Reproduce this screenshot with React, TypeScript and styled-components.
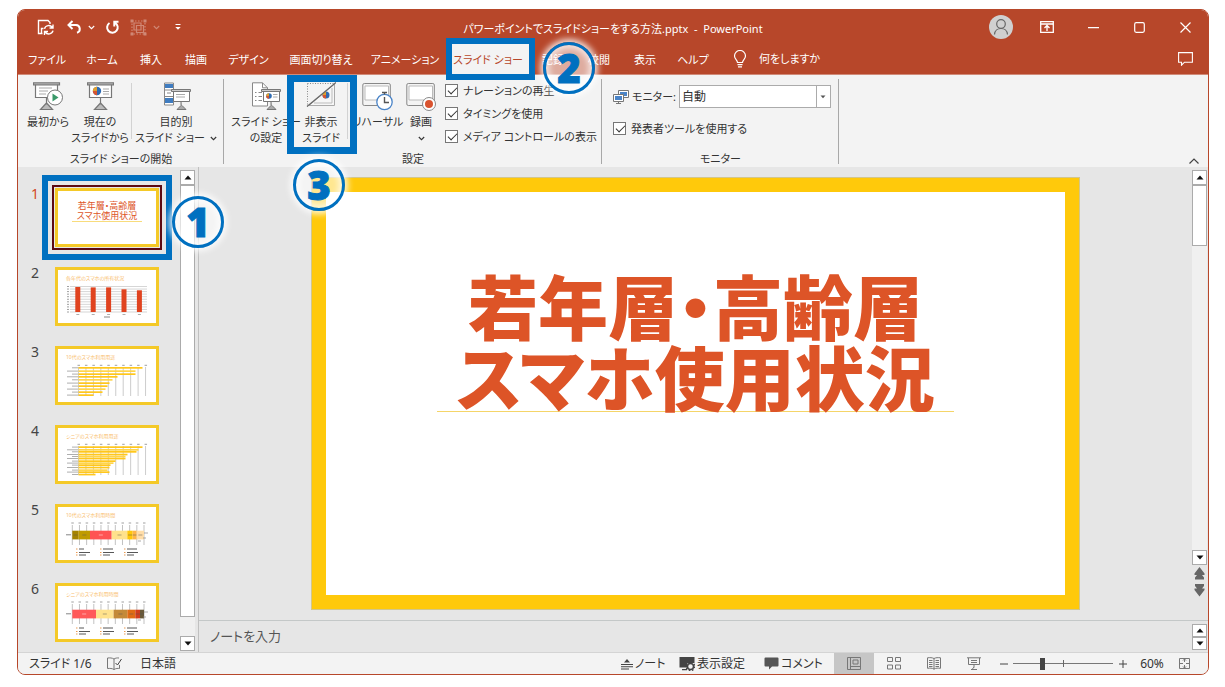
import React from 'react';
import styled, { createGlobalStyle, css } from 'styled-components';

const BLUE = '#0070c0';
const BRAND = '#b7472a';

const GlobalStyle = createGlobalStyle`
  * { box-sizing: border-box; }
  body {
    margin: 0;
    background: #fff;
    color: #333;
    font: 12px/16px "Noto Sans", "Noto Sans CJK JP", sans-serif;
    font-feature-settings: "palt";
  }
  button, input, select, textarea {
    margin: 0;
    padding: 0;
    border: 0;
    background: none;
    color: inherit;
    font: inherit;
    font-feature-settings: inherit;
  }
  svg { display: block; flex: none; }
`;

const Page = styled.div`
  min-height: 100vh;
  display: flex;
  padding: 9px 16px 12px 17px;
`;

const AppWindow = styled.div`
  flex: 1;
  min-width: 0;
  display: flex;
  flex-direction: column;
  border: 1px solid ${BRAND};
  border-radius: 8px;
  overflow: hidden;
  background: #e6e6e6;
`;

/* Title bar and tabs */

const Header = styled.header`
  background: ${BRAND};
  color: #fff;
  font-size: 11px;
`;

const TitleBar = styled.div`
  height: 34px;
  display: grid;
  grid-template-columns: 1fr auto 1fr;
  align-items: center;
`;

const QuickAccess = styled.div`
  display: flex;
  align-items: center;
  padding-left: 19px;
`;

const QuickButton = styled.button<{ $w: number; $dim?: boolean }>`
  width: ${p => p.$w}px;
  height: 24px;
  display: flex;
  align-items: center;
  opacity: ${p => (p.$dim ? 0.35 : 1)};
`;

const DocTitle = styled.h1`
  margin: 0;
  padding-top: 4px;
  font-size: 11px;
  font-weight: 400;
  white-space: pre;
`;

const WindowControls = styled.div`
  display: flex;
  justify-content: flex-end;
  align-items: center;
`;

const ControlButton = styled.button`
  width: 46px;
  height: 30px;
  display: flex;
  align-items: center;
  justify-content: center;
`;

const Tabs = styled.nav`
  height: 30px;
  display: flex;
  padding-left: 1px;
`;

const Tab = styled.button<{ $w: number; $active?: boolean }>`
  position: relative;
  width: ${p => p.$w}px;
  padding-top: 2px;
  white-space: nowrap;
  ${p => p.$active && css`background: #f3f3f3; color: ${BRAND};`}
`;

const TellMe = styled.button`
  display: flex;
  align-items: center;
  gap: 12px;
  margin-left: 15px;
`;

const Spacer = styled.div`
  flex: 1;
`;

/* Numbered guide marks */

const Frame = styled.span<{ $inset: string; $thick: number }>`
  position: absolute;
  inset: ${p => p.$inset};
  border: ${p => p.$thick}px solid ${BLUE};
  z-index: 2;
  pointer-events: none;
`;

const Badge = styled.span<{ $x: number; $y: number }>`
  position: absolute;
  left: ${p => p.$x}px;
  top: ${p => p.$y}px;
  z-index: 3;
  width: 52px;
  height: 52px;
  display: flex;
  align-items: center;
  justify-content: center;
  border: 3px solid ${BLUE};
  border-radius: 50%;
  background: rgba(255, 255, 255, 0.55);
  box-shadow: 0 0 6px 3px rgba(255, 255, 255, 0.85), inset 0 0 6px 3px rgba(255, 255, 255, 0.7);
  color: ${BLUE};
  font: 900 40px/46px "Noto Sans", sans-serif;
  -webkit-text-stroke: 1px ${BLUE};
  pointer-events: none;
`;

/* Ribbon */

const Ribbon = styled.div`
  display: flex;
  min-height: 93px;
  background: #f3f3f3;
  border-top: 1px solid #d08a78;
  font-size: 11px;
`;

const Group = styled.section<{ $w: number }>`
  width: ${p => p.$w}px;
  flex: none;
  display: flex;
  flex-direction: column;
  position: relative;
  &::after {
    content: "";
    position: absolute;
    right: 0;
    top: 4px;
    bottom: 3px;
    width: 1px;
    background: #a8a8a8;
  }
`;

const GroupBody = styled.div<{ $pad: number }>`
  flex: 1;
  display: flex;
  padding-left: ${p => p.$pad}px;
`;

const GroupName = styled.div`
  height: 16px;
  text-align: center;
`;

const BigButton = styled.button<{ $w: number }>`
  position: relative;
  width: ${p => p.$w}px;
  flex: none;
  padding-top: 7px;
  display: flex;
  flex-direction: column;
  align-items: center;
  white-space: nowrap;
`;

const BigIcon = styled.svg`
  margin-bottom: 3px;
`;

const LabelLine = styled.span`
  height: 16px;
  display: flex;
  align-items: center;
  gap: 5px;
`;

const InnerRule = styled.i`
  width: 1px;
  flex: none;
  height: 56px;
  margin: 8px 0 0 4px;
  background: #d2d2d2;
`;

const Checks = styled.div`
  padding: 4px 0 0 11px;
`;

const CheckRow = styled.label`
  height: 23px;
  display: flex;
  align-items: center;
  gap: 5px;
  white-space: nowrap;
`;

const CheckBox = styled.input.attrs({ type: 'checkbox' })`
  appearance: none;
  width: 13px;
  height: 13px;
  flex: none;
  border: 1px solid #777;
  background: #fff;
  &:checked::after {
    content: "";
    display: block;
    width: 8px;
    height: 4px;
    margin: 2px 0 0 2px;
    border: solid #333;
    border-width: 0 0 1px 1px;
    transform: rotate(-45deg);
  }
`;

const MonitorPane = styled.div`
  flex: 1;
  padding: 10px 8px 0 0;
`;

const MonitorRow = styled.div`
  display: flex;
  align-items: center;
  gap: 3px;
  height: 23px;
  margin-bottom: 9px;
  white-space: nowrap;
`;

const SelectBox = styled.div`
  flex: 1;
  height: 23px;
  display: flex;
  position: relative;
  border: 1px solid #ababab;
  background: #fff;
  svg {
    position: absolute;
    right: 0;
    top: 0;
    pointer-events: none;
  }
`;

const Select = styled.select`
  appearance: none;
  flex: 1;
  padding-left: 2px;
  font-size: 12px;
`;

const CollapseButton = styled.button`
  align-self: flex-end;
  padding: 0 9px 3px 0;
`;

/* Work area */

const Work = styled.div`
  flex: 1;
  display: flex;
  align-items: stretch;
`;

const SlideList = styled.ol`
  width: 162px;
  margin: 0;
  padding: 21px 0 10px 13px;
  display: flex;
  flex-direction: column;
  gap: 20px;
  list-style: none;
`;

const SlideItem = styled.li<{ $active?: boolean }>`
  position: relative;
  display: flex;
  gap: 16px;
  color: ${p => (p.$active ? '#d24726' : '#444')};
  font-size: 14px;
  line-height: 12px;
`;

const SlideNumber = styled.span`
  width: 8px;
`;

const Thumb = styled.button<{ $active?: boolean }>`
  width: 104px;
  height: 59px;
  background: #fff;
  border: 3px solid #f4c928;
  outline: ${p => (p.$active ? '2px solid #5c0a12' : '0')};
  outline-offset: 1px;
`;

const ThumbTitle = styled.span`
  display: block;
  width: 70px;
  margin: 0 auto 12px;
  border-bottom: 1px solid #f8dc7c;
  color: #dd5528;
  font-size: 9px;
  line-height: 10px;
  text-align: center;
`;

const ScrollColumn = styled.div<{ $pb: number }>`
  width: 15px;
  display: flex;
  flex-direction: column;
  padding: 3px 0 ${p => p.$pb}px;
`;

const ScrollButton = styled.button<{ $small?: boolean }>`
  height: ${p => (p.$small ? 13 : 15)}px;
  display: flex;
  align-items: center;
  justify-content: center;
  border: 1px solid #ababab;
  background: #fff;
`;

const Track = styled.div`
  flex: 1;
  display: flex;
  flex-direction: column;
  background: #f0f0f0;
`;

const ScrollThumb = styled.div<{ $h?: number }>`
  ${p => (p.$h ? css`height: ${p.$h}px;` : css`flex: 1; margin-bottom: 19px;`)}
  border: 1px solid #ababab;
  background: #fff;
`;

const PageJump = styled.button`
  height: 17px;
  display: flex;
  align-items: center;
  justify-content: center;
`;

const Editor = styled.main`
  flex: 1;
  min-width: 0;
  display: flex;
  flex-direction: column;
  margin-left: 3px;
  border-left: 1px solid #c0c0c0;
`;

const StageRow = styled.div`
  flex: 1;
  display: flex;
  padding-right: 1px;
`;

const Stage = styled.div`
  flex: 1;
  padding: 10px 112px 10px;
`;

const Slide = styled.article`
  min-height: 433px;
  border: 15px solid #ffc90b;
  outline: 1px solid #d2c68c;
  outline-offset: -1px;
  background: #fff;
  padding-top: 77px;
`;

const SlideTitle = styled.h2`
  width: 70%;
  margin: 0 auto;
  border-bottom: 1px solid #f5d568;
  color: #dd5427;
  font: 900 70px/71px "Noto Sans CJK JP", sans-serif;
  font-feature-settings: "palt";
  text-align: center;
  white-space: nowrap;
`;

const NotesRow = styled.div`
  display: flex;
  height: 32px;
  border-top: 1px solid #c4c8c8;
  padding-right: 1px;
`;

const Notes = styled.textarea`
  flex: 1;
  resize: none;
  padding: 5px 0 0 11px;
  font-size: 13px;
  line-height: 20px;
  outline: 0;
  &::placeholder { color: #555; }
`;

/* Status bar */

const StatusBar = styled.footer`
  height: 22px;
  display: flex;
  align-items: center;
  background: #f3f3f3;
  border-top: 1px solid #d4d4d4;
  padding-left: 11px;
`;

const StatusButton = styled.button<{ $w: number }>`
  width: ${p => p.$w}px;
  display: flex;
  align-items: center;
  gap: 2px;
  white-space: nowrap;
`;

const ViewButton = styled.button<{ $active?: boolean }>`
  width: 40px;
  height: 21px;
  display: flex;
  align-items: center;
  justify-content: center;
  background: ${p => (p.$active ? '#c6c6c6' : 'none')};
`;

const ZoomButton = styled.button`
  width: 19px;
  display: flex;
  justify-content: center;
`;

const ZoomSlider = styled.input.attrs({ type: 'range' })`
  appearance: none;
  width: 100px;
  height: 12px;
  background:
    linear-gradient(#666, #666) center / 1px 7px no-repeat,
    linear-gradient(#777, #777) center / 100% 1px no-repeat;
  &::-webkit-slider-thumb {
    appearance: none;
    width: 5px;
    height: 12px;
    background: #444;
  }
`;

const ZoomValue = styled.button`
  width: 40px;
  margin-right: 7px;
  text-align: center;
`;

/* Glyphs */

const Chevron = ({ up }: { up?: boolean }) => (
  <svg width="7" height="5" viewBox="0 0 7 5" fill="none" stroke="currentColor" strokeWidth="1.1">
    <path d={up ? 'M.5 4.2 3.5 1l3 3.2' : 'M.8 1l2.7 2.7L6.2 1'} />
  </svg>
);

const Triangle = ({ down }: { down?: boolean }) => (
  <svg width="8" height="5" viewBox="0 0 8 5" fill="#111">
    <path d={down ? 'M.5.5h7L4 4.5z' : 'M.5 4.5h7L4 .5z'} />
  </svg>
);

const DoubleArrow = ({ down }: { down?: boolean }) => (
  <svg width="11" height="13" viewBox="0 0 11 13" fill="#666">
    {down
      ? <path d="M1 0h9v2L8 4.5h2.5V6l-5 6.5-5-6.5V4.5H3L1 2z" />
      : <path d="M10 12.500H1v-2L3 8H.5V6.500L5.500 0l5 6.500V8H8l2 2.500z" />}
  </svg>
);

const Easel = ({ x = 0, y = 0 }: { x?: number; y?: number }) => (
  <g transform={`translate(${x} ${y})`} fill="none" stroke="#777" strokeWidth="1.2">
    <path d="M2.500 2v13.500h22V2" fill="#fff" />
    <path d="M.5.8h26v2H.5z" fill="#ccc" />
    <path d="M13.500 15.500v7M13.500 21l-6 6.500h12z" fill="#bbb" />
  </g>
);

const SmallEasel = ({ children }: { children?: React.ReactNode }) => (
  <g fill="none" stroke="#777" strokeWidth="1">
    <path d="M12.500 9v10.500h16V9" fill="#fff" />
    <path d="M10.500 7.500h19v2h-19z" fill="#ccc" />
    <path d="M20 19.500v4l-4 4h9l-4-4" fill="#aaa" />
    {children}
  </g>
);

const pie = (cx: number, cy: number, r: number) => (
  <g stroke="none">
    <circle cx={cx} cy={cy} r={r} fill="#2f6cb3" />
    <path d={`M${cx} ${cy}V${cy - r}A${r} ${r} 0 0 0 ${cx - r} ${cy}z`} fill="#e0a030" />
    <path d={`M${cx} ${cy}H${cx - r}A${r} ${r} 0 0 0 ${cx} ${cy + r}z`} fill="#d65532" />
  </g>
);

/* Miniature slides */

const series = (n: number, start: number, step: number) => Array.from({ length: n }, (_, i) => start + i * step);

const MiniTitle = ({ children }: { children: string }) => (
  <text x="8" y="10" fontSize="5" fill="#f9bd6c">{children}</text>
);

const Mini = ({ children }: { children: React.ReactNode }) => (
  <svg width="98" height="53" viewBox="0 0 98 53">{children}</svg>
);

const ColumnChart = () => (
  <>
    {series(11, 16.500, 2.550).map(y => <path key={y} d={`M12 ${y}h77`} stroke="#bbb" strokeWidth=".6" />)}
    {series(11, 16.500, 2.550).map(y => <path key={y} d={`M9 ${y}h2`} stroke="#888" strokeWidth=".8" />)}
    {[17, 17.400, 17.400, 19.300, 20.300].map((y, i) => (
      <g key={i}>
        <rect x={17.300 + i * 15.400} y={y} width="5" height={42 - y} fill="#e0431f" />
        <path d={`M${18.300 + i * 15.400} 44.500h3`} stroke="#999" strokeWidth=".8" />
      </g>
    ))}
    <path d="M46 47h6" stroke="#888" />
  </>
);

const BarChart = ({ rows }: { rows: [number, number][] }) => (
  <>
    {series(10, 20.500, 7.450).map(x => (
      <g key={x} stroke="#aaa">
        <path d={`M${x} 18v29`} strokeWidth=".6" />
        <path d={`M${x - 1} 16.300h2.500`} stroke="#888" strokeWidth=".8" />
      </g>
    ))}
    {rows.map(([y, right], i) => (
      <g key={y}>
        <rect x="20.500" y={y - 4} width={right - 23} height="1.700" fill={i % 3 === 1 ? '#ffd54a' : '#ffc71c'} />
        <path d={`M${i % 2 ? 9 : 14} ${y - 3.200}H20`} stroke="#777" strokeWidth=".6" />
      </g>
    ))}
  </>
);

const StackChart = ({ parts }: { parts: [number, string][] }) => {
  let x = 14.300;
  return (
    <>
      {series(11, 14.300, 7.170).map(gx => (
        <g key={gx}>
          <path d={`M${gx} 18v20`} stroke="#999" strokeWidth=".6" />
          <path d={`M${gx - 1} 16h2.500`} stroke="#888" strokeWidth=".8" />
        </g>
      ))}
      <path d="M8 27.800h5" stroke="#777" strokeWidth=".9" />
      {parts.map(([w, color], i) => {
        const left = x;
        x += w;
        return (
          <g key={i}>
            <rect x={left} y="23.700" width={w} height="8.700" fill={color} />
            <path d={`M${left + w / 2 - 2} 28h4`} stroke={w > 20 ? '#fff' : '#555'} strokeOpacity=".6" strokeWidth=".8" />
          </g>
        );
      })}
      <path d="M86 26h4M85 31h3M80 34h3" stroke="#888" strokeWidth=".7" />
      {[19, 43, 67].map(lx => (
        <g key={lx} stroke="#444" strokeWidth=".9">
          <path d={`M${lx + 2} 42h${lx > 20 ? 10 : 5}M${lx + 2} 45.500h11M${lx + 2} 48h7`} />
          <path d={`M${lx - 1} 42h1.500M${lx - 1} 45.500h1.500M${lx - 1} 48h1.500`} stroke="#e89040" />
        </g>
      ))}
    </>
  );
};

const teenUses: [number, number][] = [
  [22, 87], [25.300, 80], [28.300, 80], [31, 62], [34, 57], [37.300, 54], [40.300, 52], [43.300, 50], [46.300, 47], [49.300, 38],
];
const seniorUses: [number, number][] = [
  [22.300, 87], [25, 83], [27, 81], [29.700, 72], [31.700, 70], [33.700, 70], [36.300, 60], [38.300, 58], [40.300, 55],
  [42.700, 54], [45.300, 52], [47.300, 54], [49.700, 40],
];

const slides = [
  <ThumbTitle key="t">若年層・高齢層<br />スマホ使用状況</ThumbTitle>,
  <Mini key="a"><MiniTitle>各年代のスマホの所有状況</MiniTitle><ColumnChart /></Mini>,
  <Mini key="b"><MiniTitle>10代のスマホ利用用途</MiniTitle><BarChart rows={teenUses} /></Mini>,
  <Mini key="c"><MiniTitle>シニアのスマホ利用用途</MiniTitle><BarChart rows={seniorUses} /></Mini>,
  <Mini key="d">
    <MiniTitle>10代のスマホ利用時間</MiniTitle>
    <StackChart parts={[[6.400, '#a58300'], [11.300, '#bf9b00'], [21.700, '#ff5454'], [15.600, '#ffe28c'], [5.400, '#ffc708'], [4, '#ffb546'], [7.300, '#ffdda8']]} />
  </Mini>,
  <Mini key="e">
    <MiniTitle>シニアのスマホ利用時間</MiniTitle>
    <StackChart parts={[[23.700, '#ff5a5a'], [17.600, '#ffe28c'], [13.700, '#c48a38'], [8, '#e06c14'], [4.700, '#d23c1c'], [4, '#6b5a3a']]} />
  </Mini>,
];

const tabs: [string, number][] = [
  ['ファイル', 56], ['ホーム', 54], ['挿入', 44], ['描画', 46], ['デザイン', 59], ['画面切り替え', 86],
  ['アニメーション', 82], ['スライド ショー', 84], ['記録', 46], ['校閲', 46], ['表示', 46], ['ヘルプ', 50],
];

export default function App() {
  return (
    <>
      <GlobalStyle />
      <Page>
        <AppWindow>
          <Header>
            <TitleBar>
              <QuickAccess>
                <QuickButton $w={30} aria-label="上書き保存">
                  <svg width="18" height="17" viewBox="0 0 18 17" fill="none" stroke="#fff" strokeWidth="1.400">
                    <path d="M5.500 14.500H1.500V1.500h9.500l2 2V5M4.500 14V9.500h2" />
                    <path d="M7.500 9.800a4.300 4.300 0 0 1 7.800-1.300M16 5.500v3.500h-3.500M16 11.700a4.300 4.300 0 0 1-7.800 1.300M7.500 16v-3.500H11" />
                  </svg>
                </QuickButton>
                <QuickButton $w={21} aria-label="元に戻す">
                  <svg width="15" height="14" viewBox="0 0 15 14" fill="none" stroke="#fff" strokeWidth="2">
                    <path d="M5.500 1 1.500 5l4 4M2 5h7a4 4 0 0 1 1 7.800" />
                  </svg>
                </QuickButton>
                <QuickButton $w={17} aria-label="元に戻す履歴"><Chevron /></QuickButton>
                <QuickButton $w={25} aria-label="繰り返し">
                  <svg width="15" height="15" viewBox="0 0 15 15" fill="none" stroke="#fff" strokeWidth="2">
                    <path d="M4.500 3A5.300 5.300 0 1 0 10 2.800M13.500 1.800H9.300V6.500" />
                  </svg>
                </QuickButton>
                <QuickButton $w={23} $dim aria-label="グループ化">
                  <svg width="17" height="17" viewBox="0 0 17 17" fill="none" stroke="#fff" strokeWidth="1.200">
                    <path d="M4 4h7v7H4zM6.500 6.500h7v7h-7z" />
                    <path d="M2 2h13v13H2z" strokeDasharray="1.500 1.500" />
                    <path d="M.5.5h3v3h-3zM13.500.5h3v3h-3zM.5 13.500h3v3h-3zM13.500 13.500h3v3h-3z" fill="#fff" stroke="none" />
                  </svg>
                </QuickButton>
                <QuickButton $w={22} $dim aria-label="グループ化の種類"><Chevron /></QuickButton>
                <QuickButton $w={8} aria-label="クイック アクセスのカスタマイズ">
                  <svg width="6" height="8" viewBox="0 0 6 8" fill="#fff">
                    <path d="M.5 1h5v1.100h-5zM.3 4h5.400L3 6.800z" />
                  </svg>
                </QuickButton>
              </QuickAccess>
              <DocTitle>パワーポイントでスライドショーをする方法.pptx  -  PowerPoint</DocTitle>
              <WindowControls>
                <ControlButton aria-label="アカウント">
                  <svg width="24" height="24" viewBox="0 0 24 24" fill="none" stroke="#666" strokeWidth="1.200">
                    <circle cx="12" cy="12" r="12" fill="#d0d0d0" stroke="none" />
                    <circle cx="12" cy="9" r="4.300" />
                    <path d="M5.500 19.500c.6-8 12.400-8 13 0" />
                  </svg>
                </ControlButton>
                <ControlButton aria-label="リボンの表示オプション">
                  <svg width="14" height="12" viewBox="0 0 14 12" fill="none" stroke="#fff" strokeWidth="1.300">
                    <path d="M.7.7h12.600v10.600H.7zM.7 3h12.600M7 10V5M4.500 7 7 4.500 9.500 7" />
                  </svg>
                </ControlButton>
                <ControlButton aria-label="最小化">
                  <svg width="11" height="3" viewBox="0 0 11 3"><path d="M0 1h11v1.200H0z" fill="#fff" /></svg>
                </ControlButton>
                <ControlButton aria-label="最大化">
                  <svg width="11" height="11" viewBox="0 0 11 11" fill="none" stroke="#fff" strokeWidth="1.200">
                    <rect x=".7" y=".7" width="9.600" height="9.600" rx="1.500" />
                  </svg>
                </ControlButton>
                <ControlButton aria-label="閉じる">
                  <svg width="11" height="11" viewBox="0 0 11 11" stroke="#fff" strokeWidth="1.200">
                    <path d="M.5.5l10 10M10.500.5l-10 10" />
                  </svg>
                </ControlButton>
              </WindowControls>
            </TitleBar>
            <Tabs>
              {tabs.map(([name, w]) => {
                const active = name === 'スライド ショー';
                return (
                  <Tab key={name} $w={w} $active={active}>
                    {name}
                    {active && <Frame $inset="-6px -5px -6px 0" $thick={6} />}
                    {active && <Badge $x={97} $y={-2}>2</Badge>}
                  </Tab>
                );
              })}
              <TellMe>
                <svg width="14" height="18" viewBox="0 0 14 18" fill="none" stroke="#fff" strokeWidth="1.200">
                  <path d="M4.500 12.500c0-2.500-3-3.500-3-6.500a5.500 5.500 0 0 1 11 0c0 3-3 4-3 6.500zM4.500 14.700h5M5 16.800h4" />
                </svg>
                何をしますか
              </TellMe>
              <Spacer />
              <ControlButton aria-label="コメント">
                <svg width="15" height="14" viewBox="0 0 15 14" fill="none" stroke="#fff" strokeWidth="1.100">
                  <path d="M.6.6h13.800v9.600H6.500l-3 3v-3H.6z" />
                </svg>
              </ControlButton>
            </Tabs>
          </Header>

          <Ribbon>
            <Group $w={206}>
              <GroupBody $pad={5}>
                <BigButton $w={50}>
                  <BigIcon width="30" height="29" viewBox="0 0 30 29">
                    <Easel />
                    <path d="M6 6h13M6 9h9M6 12h7" stroke="#aaa" />
                    <circle cx="22" cy="15.500" r="7.500" fill="#fff" stroke="#777" />
                    <path d="M19.500 11.500v8l6-4z" fill="#3a9a6a" />
                  </BigIcon>
                  <LabelLine>最初から</LabelLine>
                </BigButton>
                <BigButton $w={54}>
                  <BigIcon width="27" height="29" viewBox="0 0 27 29">
                    <Easel />
                    {pie(10, 9, 4.200)}
                    <path d="M16 7h6M16 9.500h6M16 12h6" stroke="#aaa" />
                  </BigIcon>
                  <LabelLine>現在の</LabelLine>
                  <LabelLine>スライドから</LabelLine>
                </BigButton>
                <InnerRule />
                <BigButton $w={88}>
                  <BigIcon width="30" height="29" viewBox="0 0 30 29">
                    <path d="M3.500 1h9v22h-9z" fill="#fff" stroke="#888" />
                    <path d="M4 2h8v4H4zM4 16h8v5H4z" fill="#3f7cc0" />
                    <path d="M3.500 8h9M3.500 14.500h9M6 11h4" stroke="#888" />
                    <SmallEasel><path d="M15 12.500h9M15 15h9" stroke="#aaa" /></SmallEasel>
                  </BigIcon>
                  <LabelLine>目的別</LabelLine>
                  <LabelLine>スライド ショー<Chevron /></LabelLine>
                </BigButton>
              </GroupBody>
              <GroupName>スライド ショーの開始</GroupName>
            </Group>

            <Group $w={378}>
              <GroupBody $pad={9}>
                <BigButton $w={66}>
                  <BigIcon width="30" height="29" viewBox="0 0 30 29">
                    <path d="M1.500.8h10l5 5V24h-15z" fill="#fff" stroke="#888" />
                    <path d="M11.500.8v5h5M4 10.500h1.500M7.500 10.500H11M4 14.500h1.500M7.500 14.500H11M4 18.500h1.500M7.500 18.500H11" fill="none" stroke="#888" />
                    <SmallEasel><path d="M22 12.500h4.500M22 15h4.500" stroke="#aaa" />{pie(18, 14, 2.800)}</SmallEasel>
                  </BigIcon>
                  <LabelLine>スライド ショー</LabelLine>
                  <LabelLine>の設定</LabelLine>
                </BigButton>
                <BigButton $w={44}>
                  <BigIcon width="30" height="29" viewBox="0 0 30 29" fill="none">
                    <path d="M28.500 2v21.500H3z" fill="#f6f6f6" stroke="#aaa" />
                    <path d="M26 6v15H8" stroke="#bbb" />
                    {pie(20, 13, 3.500)}
                    <path d="M30 0 1 24.500V0z" fill="#f3f3f3" />
                    <path d="M1.500 1.500h27M1.500 1.500v23" stroke="#888" strokeDasharray="1 1.500" />
                    <path d="M30 .5 1 24.500" stroke="#666" strokeWidth="1.200" />
                  </BigIcon>
                  <LabelLine>非表示</LabelLine>
                  <LabelLine>スライド</LabelLine>
                  <Frame $inset="0 -14px -3px -12px" $thick={7} />
                  <Badge $x={-6} $y={84}>3</Badge>
                </BigButton>
                <InnerRule />
                <BigButton $w={60}>
                  <BigIcon width="32" height="29" viewBox="0 0 32 29" fill="none">
                    <rect x=".8" y="1.500" width="27.500" height="22" rx="1.500" fill="#f4f4f4" stroke="#888" />
                    <path d="M3 4h23.500v14H3z" fill="#fff" stroke="#bbb" />
                    <circle cx="22.500" cy="20" r="7.700" fill="#fff" stroke="#4a84c8" strokeWidth="1.300" />
                    <path d="M22.500 15v5.500H27M20 10.500h5M22.500 10.500v2" stroke="#555" strokeWidth="1.400" />
                  </BigIcon>
                  <LabelLine>リハーサル</LabelLine>
                </BigButton>
                <BigButton $w={26}>
                  <BigIcon width="30" height="29" viewBox="0 0 30 29" fill="none">
                    <rect x=".8" y="1.500" width="27.500" height="22" rx="1.500" fill="#f4f4f4" stroke="#888" />
                    <path d="M3 4h23.500v14H3z" fill="#fff" stroke="#bbb" />
                    <circle cx="23" cy="22" r="6.500" fill="#fff" stroke="#888" />
                    <circle cx="23" cy="22" r="4" fill="#d9532f" />
                  </BigIcon>
                  <LabelLine>録画</LabelLine>
                  <LabelLine><Chevron /></LabelLine>
                </BigButton>
                <Checks>
                  <CheckRow><CheckBox defaultChecked />ナレーションの再生</CheckRow>
                  <CheckRow><CheckBox defaultChecked />タイミングを使用</CheckRow>
                  <CheckRow><CheckBox defaultChecked />メディア コントロールの表示</CheckRow>
                </Checks>
              </GroupBody>
              <GroupName>設定</GroupName>
            </Group>

            <Group $w={237}>
              <GroupBody $pad={11}>
                <MonitorPane>
                  <MonitorRow>
                    <svg width="16" height="16" viewBox="0 0 16 16" fill="#fff" stroke="#777">
                      <path d="M5.500 1.500h10v7h-10z" />
                      <path d="M7 3h7v4H7z" fill="#4a84c8" stroke="none" />
                      <path d="M.5 5.500h10v7H.5zM3 14.500h5M5.500 12.500v2" />
                      <path d="M2 7h7v4H2z" fill="#4a84c8" stroke="none" />
                    </svg>
                    <label htmlFor="monitor">モニター:</label>
                    <SelectBox>
                      <Select id="monitor" defaultValue="auto"><option value="auto">自動</option></Select>
                      <svg width="14" height="21" viewBox="0 0 14 21">
                        <path d="M.5 0v21" stroke="#ababab" />
                        <path d="M4.500 9.500h5L7 12.300z" fill="#555" />
                      </svg>
                    </SelectBox>
                  </MonitorRow>
                  <CheckRow><CheckBox defaultChecked />発表者ツールを使用する</CheckRow>
                </MonitorPane>
              </GroupBody>
              <GroupName>モニター</GroupName>
            </Group>
            <Spacer />
            <CollapseButton aria-label="リボンを折りたたむ">
              <svg width="10" height="6" viewBox="0 0 10 6" fill="none" stroke="#444" strokeWidth="1.200"><path d="M.5 5.500 5 1l4.500 4.500" /></svg>
            </CollapseButton>
          </Ribbon>

          <Work>
            <SlideList>
              {slides.map((content, i) => (
                <SlideItem key={i} $active={i === 0}>
                  <SlideNumber>{i + 1}</SlideNumber>
                  <Thumb $active={i === 0} aria-label={`スライド ${i + 1}`}>{content}</Thumb>
                  {i === 0 && <Frame $inset="-13px 8px -13px 11px" $thick={6} />}
                  {i === 0 && <Badge $x={141} $y={8}>1</Badge>}
                </SlideItem>
              ))}
            </SlideList>
            <ScrollColumn $pb={1}>
              <ScrollButton aria-label="上へ"><Triangle /></ScrollButton>
              <Track><ScrollThumb /></Track>
              <ScrollButton aria-label="下へ"><Triangle down /></ScrollButton>
            </ScrollColumn>
            <Editor>
              <StageRow>
                <Stage>
                  <Slide>
                    <SlideTitle>若年層・高齢層<br />スマホ使用状況</SlideTitle>
                  </Slide>
                </Stage>
                <ScrollColumn $pb={21}>
                  <ScrollButton aria-label="上へ"><Triangle /></ScrollButton>
                  <Track><ScrollThumb $h={61} /></Track>
                  <ScrollButton aria-label="下へ"><Triangle down /></ScrollButton>
                  <PageJump aria-label="前のスライド"><DoubleArrow /></PageJump>
                  <PageJump aria-label="次のスライド"><DoubleArrow down /></PageJump>
                </ScrollColumn>
              </StageRow>
              <NotesRow>
                <Notes aria-label="ノート" placeholder="ノートを入力" />
                <ScrollColumn $pb={1}>
                  <ScrollButton $small aria-label="上へ"><Triangle /></ScrollButton>
                  <ScrollButton $small aria-label="下へ"><Triangle down /></ScrollButton>
                </ScrollColumn>
              </NotesRow>
            </Editor>
          </Work>

          <StatusBar>
            <StatusButton $w={78}>スライド 1/6</StatusButton>
            <StatusButton $w={33} aria-label="スペル チェック">
              <svg width="15" height="13" viewBox="0 0 15 13" fill="none" stroke="#777">
                <path d="M7 2v10.500M7 2C5 .8 3 .8.5 1v10.500c2.500-.2 4.500-.2 6.500 1 2-1.200 4-1.200 5.500-1V8M7 2c1.500-1 3-1.200 5-1" />
                <path d="M8.500 6l2 2L14.500 2" stroke="#444" />
              </svg>
            </StatusButton>
            <StatusButton $w={60}>日本語</StatusButton>
            <Spacer />
            <StatusButton $w={58}>
              <svg width="12" height="12" viewBox="0 0 12 12" fill="#444">
                <path d="M3 4.500h6L6 1zM0 6h12v1H0zM0 8.300h12v1H0zM0 10.600h8v1H0z" />
              </svg>
              ノート
            </StatusButton>
            <StatusButton $w={85}>
              <svg width="16" height="15" viewBox="0 0 16 15" fill="#444">
                <path d="M.5 1h15v6h-7v4.500h-8zM3 13h5v1.200H3z" />
                <circle cx="11.500" cy="10.500" r="3" fill="none" stroke="#444" strokeWidth="1.500" />
                <circle cx="11.500" cy="10.500" r="4.200" fill="none" stroke="#444" strokeWidth="1.400" strokeDasharray="1.600 1.700" />
              </svg>
              表示設定
            </StatusButton>
            <StatusButton $w={70}>
              <svg width="15" height="13" viewBox="0 0 15 13" fill="#555">
                <path d="M1.500.5h12a1 1 0 0 1 1 1v7a1 1 0 0 1-1 1H8L5 12.500v-3H1.500a1 1 0 0 1-1-1v-7a1 1 0 0 1 1-1z" />
              </svg>
              コメント
            </StatusButton>
            <ViewButton $active aria-label="標準">
              <svg width="14" height="13" viewBox="0 0 14 13" fill="none" stroke="#777"><path d="M.5.5h13v12H.5zM3.500.5v12M3.500 9.500h10M6 3h5v4H6z" /></svg>
            </ViewButton>
            <ViewButton aria-label="スライド一覧">
              <svg width="14" height="13" viewBox="0 0 14 13" fill="none" stroke="#777"><path d="M.5.5h5v4h-5zM8.500.5h5v4h-5zM.5 8h5v4h-5zM8.500 8h5v4h-5z" /></svg>
            </ViewButton>
            <ViewButton aria-label="閲覧表示">
              <svg width="14" height="13" viewBox="0 0 14 13" fill="none" stroke="#777">
                <path d="M7 1.500v11M.5.8c2.500-.3 4.500-.3 6.500.7 2-1 4-1 6.500-.7v10.500c-2.500-.3-4.500-.3-6.500.7-2-1-4-1-6.500-.7zM2 3.500h3.500M2 5.500h3.500M2 7.500h3.500M2 9.500h3.500M8.500 3.500H12M8.500 5.500H12M8.500 7.500H12M8.500 9.500H12" />
              </svg>
            </ViewButton>
            <ViewButton aria-label="スライド ショー">
              <svg width="14" height="13" viewBox="0 0 14 13" fill="none" stroke="#777"><path d="M0 .8h14M1.500 1v6.500h11V1M4 3.500h6M4 5.500h6M7 7.500v3M4 12.500h6M7 10l-2 2.500" /></svg>
            </ViewButton>
            <ZoomButton aria-label="縮小"><svg width="8" height="8" viewBox="0 0 8 8"><path d="M0 4h8" stroke="#444" /></svg></ZoomButton>
            <ZoomSlider aria-label="ズーム" min={0} max={100} defaultValue={28} />
            <ZoomButton aria-label="拡大"><svg width="8" height="8" viewBox="0 0 8 8"><path d="M0 4h8M4 0v8" stroke="#444" /></svg></ZoomButton>
            <ZoomValue>60%</ZoomValue>
            <StatusButton $w={29} aria-label="ウィンドウに合わせる">
              <svg width="11" height="11" viewBox="0 0 11 11" fill="none" stroke="#777">
                <path d="M.5.5h10v10H.5zM5.500 1v3M5.500 7v3M1 5.500h3M7 5.500h3M4 2.500 5.500 1 7 2.500M4 8.500 5.500 10 7 8.500" />
              </svg>
            </StatusButton>
          </StatusBar>
        </AppWindow>
      </Page>
    </>
  );
}
